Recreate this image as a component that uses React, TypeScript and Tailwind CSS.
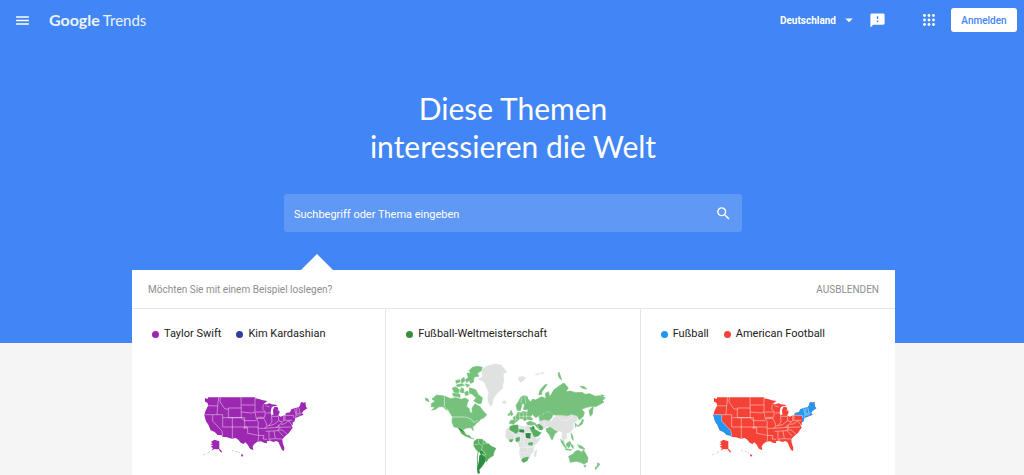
import { MdArrowDropDown, MdFeedback, MdMenu, MdSearch } from "react-icons/md";

interface LegendItem {
  label: string;
  dot: string;
}

const US_OUTLINE =
  "M30 24 L38 27 L39 22 H180 L181 25 L192 27 L204 31 L217 33 L206 42 L214 43 L224 40 L230 43 L243 44 L247 48 L236 49 L230 52 L227 66 L230 75 L235 74 L234 60 L238 51 L247 51 L250 57 L247 62 L252 61 L254 67 L250 76 L257 80 L271 74 L273 69 L285 67 L289 58 L300 54 L312 51 L315 46 L318 36 L327 38 L331 35 L333 50 L337 55 L325 63 L321 69 L326 74 L316 78 L301 84 L299 93 L293 98 L294 105 L289 104 L293 113 L288 120 L281 130 L270 139 L262 147 L263 158 L268 173 L267 183 L261 180 L254 165 L250 156 L243 153 L236 156 L224 152 L215 154 L217 160 L207 158 L198 154 L187 155 L177 163 L173 170 L175 181 L165 176 L158 164 L151 157 L145 162 L137 158 L130 149 L122 144 L111 146 L96 142 L82 140 L80 136 L68 135 L59 126 L47 121 L40 104 L33 94 L28 76 L31 64 L39 47 L38 39 L30 35 Z";

const US_ALASKA = "M48 156 L58 149 L73 154 V177 L66 178 L58 177 L50 182 L54 174 L47 170 L54 166 L46 163 L53 160 Z M73 176 L81 184 L79 188 L72 180 Z";

const US_BORDERS =
  "M39 47 L68 48 L71 22 M31 74 H83 M68 48 L66 74 M76 22 L75 35 L84 49 L89 56 L99 58 M100 54 H139 M138 22 L139 84 M100 54 V83 H139 M53 75 V93 L81 123 L83 138 M83 74 V111 M83 83 H112 M112 83 V145 M112 83 H149 V111 M83 111 H158 M147 111 V116 M147 114 H158 V130 L174 133 L190 136 M139 66 L170 69 L180 66 M139 45 H179 M139 84 L149 92 H184 M149 111 H189 M180 24 V66 L184 86 L190 96 L189 113 L191 136 L189 154 M183 66 H209 M205 43 L203 57 L211 66 L209 82 H187 M184 86 L206 85 L213 98 L216 109 L208 115 H189 M211 47 L224 51 M214 69 H229 L231 96 L222 106 M231 79 H249 M250 76 L251 92 L243 98 L235 104 L217 108 M251 92 L262 96 L270 88 L270 75 M208 115 L250 112 L288 111 M212 124 L248 122 L255 112 M191 136 L207 137 L204 147 L216 148 M222 124 V151 M237 123 L241 146 L225 147 V153 M241 146 L261 147 M249 122 L265 138 M248 120 L261 120 L276 132 M253 104 L244 112 M262 96 L254 104 L250 112 M268 91 H292 M258 103 L267 102 L281 93 L291 105 M266 76 V91 M268 76 H295 L297 84 M299 55 L303 74 L302 83 M306 52 L305 70 H320 M311 52 L315 69 M303 75 H317";

interface UsMapProps {
  className: string;
  highlight?: boolean;
}

const UsMap = ({ className, highlight }: UsMapProps) => (
  <svg viewBox="0 0 360 210" className={`w-[120px] ${className}`} role="img" aria-label="USA">
    <path d={US_OUTLINE} fill="currentColor" />
    <path d={US_ALASKA} fill="currentColor" />
    <path d="M45 184 L37 190 M31 192 L24 195" stroke="currentColor" strokeWidth="2" strokeOpacity="0.4" />
    <path d="M111 181 l5 2 M122 184 l6 2 M131 187 l4 2" stroke="currentColor" strokeWidth="2" strokeOpacity="0.5" />
    <path d="M139 192 l6 4 -4 5 -3 -5z" fill="currentColor" />
    {highlight && (
      <g fill="#2196f3">
        <path d="M31 74 H53 V93 L81 123 L83 138 L68 135 L59 126 L47 121 L40 104 L33 94 L28 76Z" />
        <path d="M271 74 L273 69 L285 67 L289 58 L300 54 L312 51 L315 46 L318 36 L327 38 L331 35 L333 50 L337 55 L325 63 L321 69 L326 74 L316 78 L301 84 L299 93 L293 96 L295 78 Z" />
      </g>
    )}
    <path d={US_BORDERS} fill="none" stroke="#fff" strokeOpacity="0.65" strokeWidth="2" />
  </svg>
);

const WorldMap = () => (
  <svg viewBox="0 0 600 360" className="w-[200px]" role="img" aria-label="Welt">
    {/* countries without data */}
    <g fill="#e0e2e2" stroke="#e0e2e2" strokeWidth="1.5" strokeLinejoin="round">
      <path d="M190 73 L202 65 L200 45 L210 37 L224 31 L240 27 L258 30 L276 51 L265 56 L267 79 L262 91 L264 99 L253 108 L242 121 L235 131 L231 150 L226 153 L220 142 L218 125 L221 113 L212 91 L207 80 Z" />
      <path d="M261 140 L270 137 L275 142 L267 147Z M310 67 L322 64 L333 69 L326 76 L317 82 L312 77Z M360 59 l10 -4 3 4z M374 55 l11 -3 2 5z" />
      <path d="M273 226 L282 214 L300 209 L318 213 L344 214 L352 226 L354 242 L365 251 L376 248 L370 260 L356 273 L355 288 L347 300 L341 312 L329 321 L321 319 L313 297 L315 278 L308 263 L300 255 L284 259 L272 247 Z" />
      <path d="M359 289 L366 284 L363 303 L358 306Z" />
      <path d="M371 193 L400 190 L410 199 L415 188 L431 181 L458 181 L471 178 L487 183 L486 198 L474 205 L476 219 L466 232 L450 237 L442 231 L424 226 L410 221 L398 214 L386 221 L374 214 Z" />
      <path d="M442 230 L454 237 L457 253 L451 249 L447 263 L441 247Z" />
    </g>

    {/* main interest areas */}
    <g fill="#76c17c" stroke="#76c17c" strokeWidth="2" strokeLinejoin="round">
      <path d="M49 146 L60 139 L51 132 L65 120 L88 123 V153 L101 166 L94 164 L84 155 L72 155 L63 162 L50 166 L60 156 L49 155Z" />
      <path d="M90 124 L107 131 L121 128 L140 133 L150 129 L161 135 L157 143 L155 156 L162 160 L166 174 L172 173 L171 160 L180 146 L187 151 L194 154 L202 165 L215 179 L207 188 L197 193 L189 202 L177 201 L165 190 L145 185 H112 L100 166 L90 155Z" />
      <path d="M112 187 L150 187 L166 192 L176 203 L189 196 L181 209 L173 215 L175 227 L168 218 L154 219 L145 224 L138 219 L117 216 L111 201Z" />
      <path d="M112 99 L122 96 L133 104 L130 115 L117 112Z M139 98 L147 103 L145 114 L135 111Z M149 111 L159 109 L160 120 L151 121Z M163 98 L182 104 L190 119 L202 128 L199 145 L190 146 L176 137 L184 129 L171 117 L163 115Z M113 115 L135 118 L135 127 L115 123Z" />
      <path d="M151 73 L160 69 L156 54 L168 55 L162 47 L172 37 L187 34 L202 37 L198 48 L187 54 L191 64 L177 66 L175 82 L166 85 L163 76 L155 83Z" />
      <path d="M122 77 l12 -3 2 6 -12 5z M139 73 l8 -6 2 12 -9 5z M124 90 l16 -4 9 5 -22 4z M151 87 l13 3 -7 7z" />
      <path d="M283 205 L287 196 L297 195 L294 187 L303 183 L309 172 L318 174 L323 169 L333 171 L344 170 L351 180 L344 186 L353 191 L350 195 L337 193 L328 197 L321 190 L312 192 L307 198 L299 203 L296 208Z" />
      <path d="M285 173 L288 166 L294 178 L289 183Z M280 176 l5 0 -1 5 -5 0z M307 166 L303 151 L311 139 L317 127 L327 122 L337 125 L341 148 L335 164 L325 163 L329 149 L322 144 L316 167Z" />
      <path d="M337 130 L347 141 L353 132 L362 135 L380 125 L393 131 L391 115 L401 110 L403 125 L411 115 L416 105 L434 92 L447 84 L460 99 L452 110 L466 108 L482 113 L501 112 L510 118 L524 116 L541 124 L554 122 L571 129 L562 136 L567 141 L550 151 L542 155 L535 153 L532 177 L526 184 L522 167 L535 153 L515 157 L500 163 L508 172 L505 184 L493 195 L487 182 L471 178 L457 183 L438 181 L422 181 L411 177 L402 169 L386 173 L383 181 L370 182 L363 188 L352 178 L341 173 L336 159Z" />
      <path d="M371 119 L375 106 L388 91 L397 87 L389 99 L382 108 L379 119Z M432 51 L436 62 L440 75 L433 69 L429 57Z M495 94 l13 1 7 7 -12 -2z M31 129 l8 3 3 8 -10 -4z M558 119 l10 3 -8 3z" />
      <path d="M371 185 L386 180 L389 173 L403 171 L414 180 L409 190 L401 196 L387 193 L376 197Z" />
      <path d="M335 203 L345 199 L358 203 L364 208 L349 211 L337 209Z M393 221 L406 217 L418 226 L428 230 L420 235 L414 249 L411 255 L403 239 L395 230Z" />
      <path d="M461 304 L473 298 L482 288 L491 286 L501 292 L505 284 L513 298 L519 309 L517 321 L507 327 L496 322 L484 319 L466 322Z M506 331 l7 0 -3 6z M548 323 l7 5 -8 8 0 -5z M541 337 l8 -3 -7 10z" />
      <path d="M437 253 l6 5 8 15 4 5 -3 2 -12 -17z M454 266 l10 -7 4 6 -6 13 -7 -5z M452 281 l18 3 -3 2 -16 -2z M469 268 l5 3 1 10 -5 -5z M488 269 L501 274 L510 283 L494 279Z M468 235 l5 8 2 13 -5 -7z" />
      <path d="M486 213 l6 -3 8 -11 2 -7 4 4 -5 12 -11 6z M480 205 l5 3 -3 9z" />
    </g>

    <g fill="#58ae61" stroke="#58ae61" strokeWidth="1" strokeLinejoin="round">
      <path d="M283 224 L286 214 L297 210 L309 210 L311 229 L303 236 L294 230Z" />
      <path d="M344 218 L355 215 L359 222 L370 229 L379 233 L370 244 L358 246 L351 233Z M360 211 L372 207 L384 216 L382 225 L373 224Z" />
      <path d="M283 254 l11 -1 -3 8 -7 -1z M302 249 L315 247 L313 258 L303 260Z M340 264 l13 -2 -1 9 -11 -1z M319 315 L328 307 L341 306 L337 317 L325 323Z" />
      <path d="M130 218 L141 223 L148 230 L153 239 L164 242 L170 251 L159 246 L149 242 L140 236Z M170 249 l7 3 -2 1z" />
      <path d="M177 259 L187 252 L202 253 L214 263 L221 266 L228 273 L243 280 L237 292 L235 302 L222 310 L214 321 L206 302 L193 291 L183 284 L176 272Z" />
    </g>
    <g fill="#2b8c44">
      <path d="M193 301 L200 297 L210 306 L212 318 L207 327 L200 337 L193 344 L195 355 L188 356 L186 343 L191 321Z" />
      <path d="M195 287 l8 2 0 10 -7 -2z M311 223 L328 224 L328 233 L313 231Z M331 235 L347 234 L346 252 L333 249Z M353 213 l6 3 -3 7 -5 -3z M128 218 l10 3 9 11 -10 -5z" />
      <path d="M190 286 L187 306 L188 340" fill="none" stroke="#2b8c44" strokeWidth="2" />
    </g>

    {/* borders */}
    <g fill="none" stroke="#fff" strokeWidth="1.5" strokeOpacity="0.8">
      <path d="M88 123 V154 L101 167 M111 186 H150 L167 191 L176 202 L189 196 M190 253 L192 266 L203 273 L199 285 L207 289 L214 301 M178 270 L191 267 M205 254 L204 267 L219 264 M200 297 L211 304" />
      <path d="M411 188 L424 181 L438 181 L459 184 L471 179 M427 184 L440 195 L459 197 L473 186 M302 183 V196 M314 175 V191 M325 170 V191 M335 171 V193 M314 184 H344 M320 126 L318 144 M329 124 L333 147 M306 192 L299 197" />
      <path d="M283 226 L301 241 L318 240 L328 250 L351 252 M312 209 V229 M329 213 V248 M329 232 H352 M300 244 V255 M317 242 L316 263 M326 252 V270 L338 274 V295 M316 277 H355 M314 293 H330 V311 M346 298 L338 292 M386 204 L394 215 M365 207 L373 222" />
    </g>
  </svg>
);

const AppsIcon = () => (
  <svg viewBox="0 0 24 24" fill="currentColor" className="h-[18px] w-[18px]">
    {[6, 12, 18].map((y) => [6, 12, 18].map((x) => <circle key={`${x}-${y}`} cx={x} cy={y} r="1.9" />))}
  </svg>
);

const Legend = ({ items }: { items: LegendItem[] }) => (
  <ul className="flex gap-[15px] text-[11px] leading-4 text-[#212121]">
    {items.map((item) => (
      <li key={item.label} className="flex items-center gap-[5px] whitespace-nowrap">
        <span className={`h-[7px] w-[7px] rounded-full ${item.dot}`} />
        {item.label}
      </li>
    ))}
  </ul>
);

const Header = () => (
  <header className="flex h-10 items-center justify-between pl-[14px] pr-[7px]">
    <div className="flex items-center gap-[18px]">
      <button type="button" aria-label="Menü">
        <MdMenu className="h-[17px] w-[17px]" />
      </button>
      <a href="#" className="flex items-baseline gap-[3px] font-[Lato,sans-serif] leading-5 text-white/90">
        <span className="text-[16px] font-bold">Google</span>
        <span className="text-[15px]">Trends</span>
      </a>
    </div>
    <div className="flex items-center">
      <button type="button" className="flex items-center gap-1 text-[10px] font-bold">
        Deutschland
        <MdArrowDropDown className="h-[18px] w-[18px]" />
      </button>
      <button type="button" aria-label="Feedback geben" className="ml-[11px]">
        <MdFeedback className="h-[17px] w-[17px]" />
      </button>
      <button type="button" aria-label="Google-Apps" className="ml-[34px]">
        <AppsIcon />
      </button>
      <button
        type="button"
        className="ml-[13px] h-6 w-[66px] rounded-[3px] bg-white text-[10px] font-medium text-[#4285f4]"
      >
        Anmelden
      </button>
    </div>
  </header>
);

const App = () => {
  return (
    <div className="flex h-screen flex-col overflow-hidden bg-[#f5f5f5] font-[Roboto,sans-serif]">
      <div className="bg-[#4285f4] pb-[111px] text-white">
        <Header />
        <div className="flex flex-col items-center pl-0.5 pt-[49px]">
          <h1 className="text-center font-[Lato,sans-serif] text-[30px] leading-[38px]">
            Diese Themen
            <br />
            interessieren die Welt
          </h1>
          <form className="mt-[29px] flex h-[38px] w-[458px] max-w-full items-center rounded-[3px] bg-white/16 px-[10px]">
            <input
              type="text"
              aria-label="Suchbegriff oder Thema eingeben"
              placeholder="Suchbegriff oder Thema eingeben"
              className="h-full flex-1 bg-transparent pt-0.5 text-[11px] text-white outline-none placeholder:text-white"
            />
            <button type="submit" aria-label="Suchen">
              <MdSearch className="h-[17px] w-[17px] stroke-white" />
            </button>
          </form>
        </div>
      </div>

      <main className="-mt-[73px] flex flex-1 justify-center pl-[3px]">
        <section className="relative flex w-[763px] max-w-full flex-col bg-white">
          <div className="absolute -top-4 left-[169px] border-x-16 border-b-16 border-x-transparent border-b-white" />
          <div className="flex h-[39px] items-center justify-between border-b border-[#e5e5e5] px-4">
            <p className="text-[10px] text-[#8e8e8e]">Möchten Sie mit einem Beispiel loslegen?</p>
            <button type="button" className="text-[10px] text-[#8e8e8e]">
              AUSBLENDEN
            </button>
          </div>
          <div className="grid flex-1 grid-cols-3 divide-x divide-[#e5e5e5]">
            <article className="pl-5 pt-[17px]">
              <Legend
                items={[
                  { label: "Taylor Swift", dot: "bg-[#9c27b0]" },
                  { label: "Kim Kardashian", dot: "bg-[#303f9f]" },
                ]}
              />
              <div className="flex pl-[43px] pt-12">
                <UsMap className="text-[#9c27b0]" />
              </div>
            </article>
            <article className="pl-5 pt-[17px]">
              <Legend items={[{ label: "Fußball-Weltmeisterschaft", dot: "bg-[#388e3c]" }]} />
              <div className="flex pl-[9px] pt-[13px]">
                <WorldMap />
              </div>
            </article>
            <article className="pl-5 pt-[17px]">
              <Legend
                items={[
                  { label: "Fußball", dot: "bg-[#2196f3]" },
                  { label: "American Football", dot: "bg-[#f44336]" },
                ]}
              />
              <div className="flex pl-[43px] pt-12">
                <UsMap className="text-[#f44336]" highlight />
              </div>
            </article>
          </div>
        </section>
      </main>
    </div>
  );
};

export default App;
